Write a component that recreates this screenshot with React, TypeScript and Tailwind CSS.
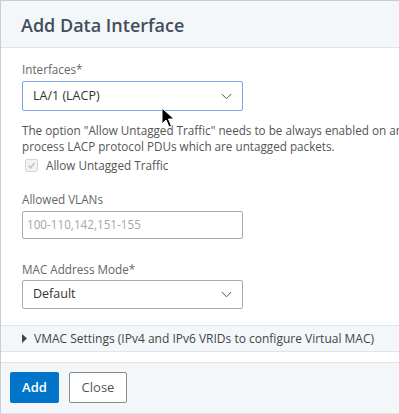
import React from "react";

const Chevron = () => (
  <svg width="11" height="7" viewBox="0 0 11 7" className="shrink-0">
    <path d="M0.8 1 L5.5 5.8 L10.2 1" fill="none" stroke="#555" strokeWidth="1" />
  </svg>
);

export default function App() {
  return (
    <div
      className="relative w-[399px] h-[414px] overflow-hidden bg-white border-t border-l border-[#c9ccd0] flex flex-col"
      style={{ fontFamily: '"Open Sans", "Liberation Sans", sans-serif' }}
    >
      {/* Header */}
      <div className="h-[47px] shrink-0 bg-[#f4f7fa] border-b border-[#dfe3e8] flex items-center pl-[20px]">
        <h1 className="text-[18px] font-semibold text-[#434d5c] leading-none mt-[2px]">Add Data Interface</h1>
      </div>

      {/* Body */}
      <div className="flex-1 flex flex-col pl-[21px] pt-[13px] whitespace-nowrap">
        <label className="text-[11.7px] text-[#666] leading-[16px]">Interfaces*</label>
        <div className="mt-[4px] w-[221px] h-[30px] border border-[#7aa3e0] rounded-[2px] flex items-center justify-between pl-[10px] pr-[10px]">
          <span className="text-[12.5px] text-[#333]">LA/1 (LACP)</span>
          <Chevron />
        </div>

        <p className="mt-[11px] text-[11.7px] text-[#555] leading-[16px]">
          The option "Allow Untagged Traffic" needs to be always enabled on an LA channel to
          <br />
          process LACP protocol PDUs which are untagged packets.
        </p>
        <div className="mt-[3px] flex items-center pl-[3px]">
          <span className="w-[13px] h-[13px] border border-[#d6d6d6] bg-[#f2f2f2] rounded-[2px] flex items-center justify-center">
            <svg width="9" height="9" viewBox="0 0 9 9">
              <path d="M1.5 4.8 L3.6 6.8 L7.5 2" fill="none" stroke="#c4c4c4" strokeWidth="1.5" />
            </svg>
          </span>
          <span className="ml-[8px] text-[11.7px] text-[#555]">Allow Untagged Traffic</span>
        </div>

        <label className="mt-[16px] text-[11.7px] text-[#666] leading-[16px]">Allowed VLANs</label>
        <div className="mt-[4px] w-[221px] h-[28px] border border-[#aaa] rounded-[2px] flex items-center pl-[4px]">
          <span className="text-[11.7px] text-[#a6a6a6]">100-110,142,151-155</span>
        </div>

        <label className="mt-[22px] text-[11.7px] text-[#666] leading-[16px]">MAC Address Mode*</label>
        <div className="mt-[3px] w-[221px] h-[29px] border border-[#aaa] rounded-[2px] flex items-center justify-between pl-[10px] pr-[10px]">
          <span className="text-[12.5px] text-[#333]">Default</span>
          <Chevron />
        </div>
      </div>

      {/* VMAC row */}
      <div className="shrink-0 h-[27px] bg-[#f4f7fa] border-y border-[#e1e5ea] flex items-center pl-[21px] whitespace-nowrap">
        <svg width="5" height="9" viewBox="0 0 5 9">
          <path d="M0 0 L5 4.5 L0 9 Z" fill="#444" />
        </svg>
        <span className="ml-[7px] text-[12px] text-[#444]">VMAC Settings (IPv4 and IPv6 VRIDs to configure Virtual MAC)</span>
      </div>
      <div className="shrink-0 h-[10px]" />

      {/* Footer */}
      <div className="shrink-0 h-[52px] bg-[#f4f7fa] border-t border-b border-[#dfe3e8] flex items-start pt-[9px] pl-[9px] gap-[10px]">
        <button className="w-[49px] h-[31px] bg-[#0175c9] rounded-[2px] text-white text-[13px] font-semibold">Add</button>
        <button className="w-[58px] h-[31px] bg-white border border-[#8a8a8a] rounded-[2px] text-[#555] text-[13px]">Close</button>
      </div>

      {/* Mouse cursor */}
      <svg className="absolute left-[160px] top-[106px]" width="14" height="22" viewBox="0 0 14 22">
        <path d="M1 1 L1 17 L5 13 L8 20 L10.5 19 L7.5 12 L13 12 Z" fill="#000" stroke="#fff" strokeWidth="1" strokeLinejoin="round" />
      </svg>
    </div>
  );
}
